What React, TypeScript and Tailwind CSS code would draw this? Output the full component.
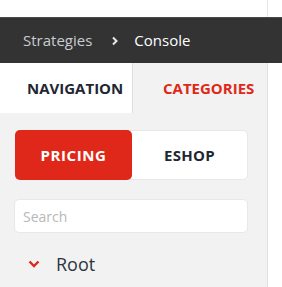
import React from "react";

export default function App() {
  return (
    <div className="w-[282px] h-[287px] overflow-hidden bg-white" style={{ fontFamily: '"Open Sans", sans-serif' }}>
      <div className="h-[17px] flex">
        <div className="w-[268px] border-r border-[#e6e6e6]" />
      </div>
      <div className="h-[46px] bg-[#333333] border-t border-[#4a4a4a] flex items-center pl-[23px] text-[15px]">
        <span className="text-[#c9ccd1]">Strategies</span>
        <svg className="ml-[19px] mr-[15px]" width="8" height="10" viewBox="0 0 8 10">
          <path d="M2 1.5 L5.5 5 L2 8.5" stroke="#e8e8e8" strokeWidth="2" fill="none" />
        </svg>
        <span className="text-white">Console</span>
      </div>
      <div className="flex">
        <div className="w-[268px] border-r border-[#e0e0e0] bg-[#f2f2f2] h-[224px]">
          <div className="flex h-[50px]">
            <div className="w-[133px] bg-white border-r border-[#dedede] flex items-center pl-[27px] text-[15px] font-bold text-[#1f2733]">
              NAVIGATION
            </div>
            <div className="flex-1 flex items-center pl-[30px] text-[15px] font-bold text-[#e0281a]">
              CATEGORIES
            </div>
          </div>
          <div className="pl-[14px] pt-[17px] w-[248px]">
            <div className="ml-[1px] h-[50px] flex bg-white rounded-[5px] border border-[#e8e8e8]">
              <div className="w-[117px] -my-[1px] -ml-[1px] bg-[#e0281a] rounded-[5px] flex items-center justify-center text-white font-bold text-[15px] tracking-[0.6px]">
                PRICING
              </div>
              <div className="flex-1 flex items-center justify-center text-[#1f2733] font-bold text-[15px] tracking-[0.3px]">
                ESHOP
              </div>
            </div>
            <div className="mt-[19px] h-[34px] bg-white rounded-[5px] border border-[#e8e8e8] flex items-center pl-[8px] text-[14px] text-[#b8b8b8]">
              Search
            </div>
            <div className="mt-[17px] flex items-center pl-[14px] h-[28px]">
              <svg width="12" height="8" viewBox="0 0 12 8">
                <path d="M1.5 1.5 L6 6 L10.5 1.5" stroke="#e0281a" strokeWidth="2.4" fill="none" />
              </svg>
              <span className="ml-[16px] text-[18px] text-[#2d3540]">Root</span>
            </div>
          </div>
        </div>
      </div>
    </div>
  );
}
